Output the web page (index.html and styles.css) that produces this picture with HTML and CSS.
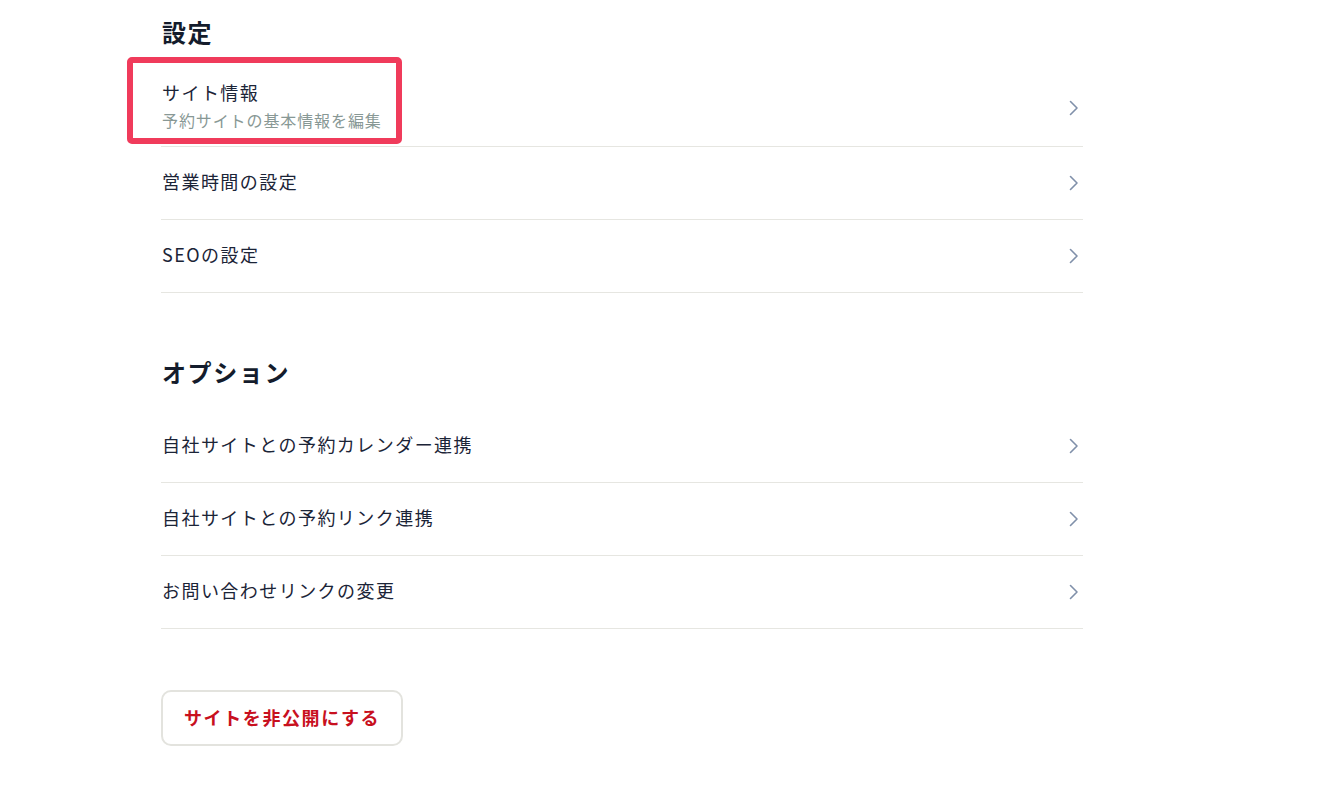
FILE: index.html
```html
<!DOCTYPE html>
<html lang="ja">
<head>
<meta charset="utf-8">
<link rel="stylesheet" href="styles.css">
</head>
<body>
<main class="page">
  <section class="section">
    <h2 class="section-title">設定</h2>
    <ul class="list">
      <li class="row row-double">
        <div class="highlight"></div>
        <div class="row-text">
          <div class="row-title">サイト情報</div>
          <div class="row-sub">予約サイトの基本情報を編集</div>
        </div>
        <svg class="chev" width="10" height="16" viewBox="0 0 10 16"><path d="M1.5 1.5 L8 8 L1.5 14.5" fill="none" stroke="#8090aa" stroke-width="1.6" stroke-linecap="round" stroke-linejoin="round"/></svg>
      </li>
      <li class="row">
        <div class="row-title">営業時間の設定</div>
        <svg class="chev" width="10" height="16" viewBox="0 0 10 16"><path d="M1.5 1.5 L8 8 L1.5 14.5" fill="none" stroke="#8090aa" stroke-width="1.6" stroke-linecap="round" stroke-linejoin="round"/></svg>
      </li>
      <li class="row">
        <div class="row-title">SEOの設定</div>
        <svg class="chev" width="10" height="16" viewBox="0 0 10 16"><path d="M1.5 1.5 L8 8 L1.5 14.5" fill="none" stroke="#8090aa" stroke-width="1.6" stroke-linecap="round" stroke-linejoin="round"/></svg>
      </li>
    </ul>
  </section>
  <section class="section section-gap">
    <h2 class="section-title">オプション</h2>
    <ul class="list">
      <li class="row">
        <div class="row-title">自社サイトとの予約カレンダー連携</div>
        <svg class="chev" width="10" height="16" viewBox="0 0 10 16"><path d="M1.5 1.5 L8 8 L1.5 14.5" fill="none" stroke="#8090aa" stroke-width="1.6" stroke-linecap="round" stroke-linejoin="round"/></svg>
      </li>
      <li class="row">
        <div class="row-title">自社サイトとの予約リンク連携</div>
        <svg class="chev" width="10" height="16" viewBox="0 0 10 16"><path d="M1.5 1.5 L8 8 L1.5 14.5" fill="none" stroke="#8090aa" stroke-width="1.6" stroke-linecap="round" stroke-linejoin="round"/></svg>
      </li>
      <li class="row">
        <div class="row-title">お問い合わせリンクの変更</div>
        <svg class="chev" width="10" height="16" viewBox="0 0 10 16"><path d="M1.5 1.5 L8 8 L1.5 14.5" fill="none" stroke="#8090aa" stroke-width="1.6" stroke-linecap="round" stroke-linejoin="round"/></svg>
      </li>
    </ul>
  </section>
  <div class="actions">
    <button class="btn-danger" type="button">サイトを非公開にする</button>
  </div>
</main>
</body>
</html>
```

FILE: styles.css
```css
* { box-sizing: border-box; }
html, body {
  margin: 0;
  padding: 0;
  background: #ffffff;
}
body {
  font-family: "Noto Sans CJK JP", "Noto Sans", sans-serif;
  color: #1b2437;
}
.page {
  width: 922px;
  margin-left: 161px;
  padding-top: 14px;
}
.section-title {
  margin: 0 0 20px 1px;
  font-size: 24px;
  line-height: 36px;
  font-weight: 700;
  letter-spacing: 1.6px;
  color: #141c2c;
}
.section-gap {
  margin-top: 61px;
}
.list {
  list-style: none;
  margin: 0;
  padding: 0;
}
.row {
  position: relative;
  display: flex;
  align-items: center;
  justify-content: space-between;
  height: 73px;
  padding-left: 1px;
  padding-bottom: 4px;
  border-bottom: 1px solid #e6e6e1;
}
.row .chev {
  margin-top: 4px;
}
.row-double {
  height: 77px;
}
.row-text {
  display: flex;
  flex-direction: column;
}
.row-title {
  font-size: 18px;
  line-height: 28px;
  letter-spacing: 1.45px;
  font-weight: 400;
}
.row-sub {
  font-size: 16px;
  line-height: 28px;
  letter-spacing: 0.9px;
  color: #889895;
}
.chev {
  display: block;
  margin-right: 4px;
  flex: none;
}
.highlight {
  position: absolute;
  left: -34px;
  top: -13px;
  width: 275px;
  height: 87px;
  border: 6px solid #f03b5b;
  border-radius: 5px;
  pointer-events: none;
}
.actions {
  margin-top: 61px;
}
.btn-danger {
  height: 56px;
  padding: 0 21px 3px;
  background: #ffffff;
  border: 2px solid #e3e3de;
  border-radius: 10px;
  font-family: "Noto Sans CJK JP", "Noto Sans", sans-serif;
  font-size: 18px;
  font-weight: 700;
  letter-spacing: 1.6px;
  color: #c8101e;
  cursor: pointer;
}
```
